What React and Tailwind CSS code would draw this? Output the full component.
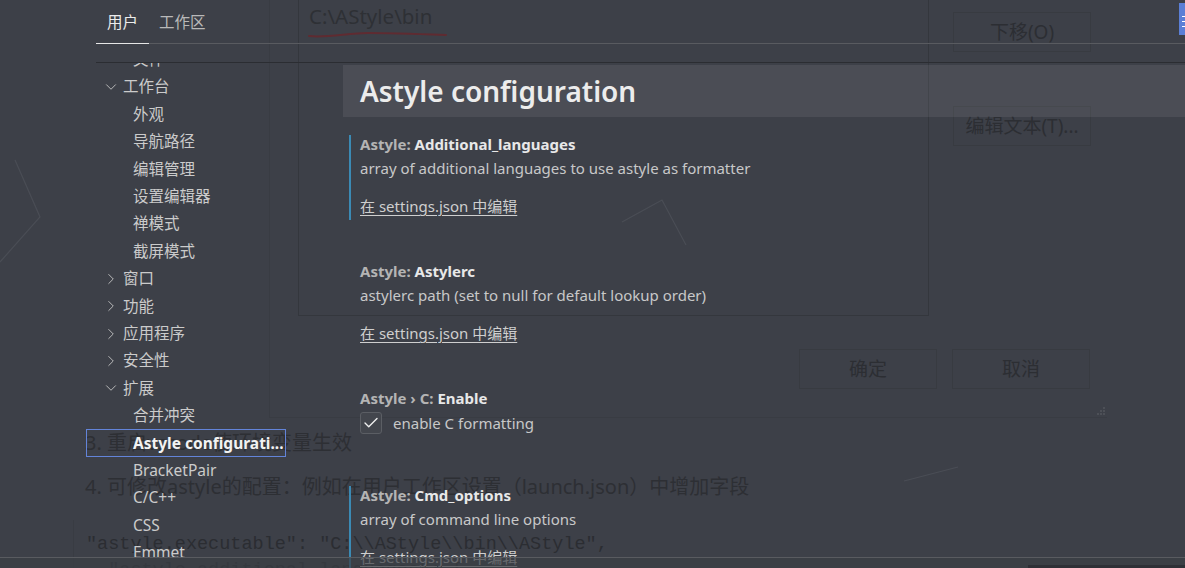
import React from "react";
import { ChevronDown, ChevronRight, Check } from "lucide-react";

const tree = [
  { label: "文件", level: 2 },
  { label: "工作台", level: 1, open: true },
  { label: "外观", level: 2 },
  { label: "导航路径", level: 2 },
  { label: "编辑管理", level: 2 },
  { label: "设置编辑器", level: 2 },
  { label: "禅模式", level: 2 },
  { label: "截屏模式", level: 2 },
  { label: "窗口", level: 1 },
  { label: "功能", level: 1 },
  { label: "应用程序", level: 1 },
  { label: "安全性", level: 1 },
  { label: "扩展", level: 1, open: true },
  { label: "合并冲突", level: 2 },
  { label: "Astyle configurati...", level: 2, selected: true },
  { label: "BracketPair", level: 2 },
  { label: "C/C++", level: 2 },
  { label: "CSS", level: 2 },
  { label: "Emmet", level: 2 },
];

function TreeRow({ item }) {
  return (
    <div
      className={
        "h-[27.4px] flex items-center shrink-0 " +
        (item.selected ? "ring-1 ring-inset ring-[#6384d9]" : "")
      }
    >
      {item.level === 1 ? (
        <>
          <span className="w-[16px]" />
          {item.open ? (
            <ChevronDown size={18} strokeWidth={1.2} className="text-[#c5c5c5]" />
          ) : (
            <ChevronRight size={18} strokeWidth={1.2} className="text-[#c5c5c5]" />
          )}
          <span className="ml-[3px] text-[#cbcbcb]">{item.label}</span>
        </>
      ) : (
        <span
          className={
            "ml-[47px] whitespace-nowrap " +
            (item.selected ? "font-bold text-[#f2f2f2]" : "text-[#cbcbcb]")
          }
        >
          {item.label}
        </span>
      )}
    </div>
  );
}

function Link() {
  return (
    <div className="mt-[14px] h-[24px] leading-[24px] text-[#cfcfcf] underline underline-offset-[3px] decoration-[#cfcfcf]">
      在 settings.json 中编辑
    </div>
  );
}

function Title({ pre, name }) {
  return (
    <div className="h-[18px] leading-[18px] font-bold whitespace-nowrap">
      <span className="text-[#b4b4b4]">{pre}</span>
      <span className="text-[#e8e8e8]">{name}</span>
    </div>
  );
}

export default function App() {
  return (
    <div
      className="relative w-[1185px] h-[568px] overflow-hidden bg-[#3d4048]"
      style={{ fontFamily: "'Noto Sans', 'Noto Sans CJK SC', sans-serif" }}
    >
      {/* background: faded dialog and blog text */}
      <div className="absolute inset-0 text-[#2c2e33]">
        <div className="ml-[269px] w-[838px] h-[418px] border-l border-b border-[#393c43] flex flex-col relative">
          <div className="flex h-[317px]">
            <div className="ml-[28px] w-[631px] h-[317px] -mt-px border border-[#34373d] pl-[10px] pt-[3px]">
              <div className="text-[20.5px] leading-[26px] text-[#2e3035]">C:\AStyle\bin</div>
              <svg width="140" height="10" viewBox="0 0 140 10" className="-ml-[1px] mt-[1px]">
                <path
                  d="M1 6 C 20 8, 40 3, 60 3 S 110 4, 138 5"
                  fill="none"
                  stroke="#5f2b31"
                  strokeWidth="2"
                  strokeLinecap="round"
                />
              </svg>
            </div>
            <div className="ml-[24px] flex flex-col">
              <div className="mt-[12px] w-[138px] h-[40px] border border-[#383b41] flex items-center justify-center text-[19px]">
                下移(O)
              </div>
              <div className="mt-[54px] w-[138px] h-[40px] border border-[#383b41] flex items-center justify-center text-[19px]">
                编辑文本(T)...
              </div>
            </div>
          </div>
          <div className="mt-[32px] flex justify-end pr-[17px] gap-[15px]">
            <div className="w-[138px] h-[40px] border border-[#383b41] flex items-center justify-center text-[19px]">
              确定
            </div>
            <div className="w-[138px] h-[40px] border border-[#383b41] flex items-center justify-center text-[19px]">
              取消
            </div>
          </div>
          <div className="absolute right-[2px] bottom-[2px] grid grid-cols-3 gap-[1px]">
            {[0, 0, 1, 0, 1, 1, 1, 1, 1].map((v, i) => (
              <span key={i} className={"w-[2px] h-[2px] " + (v ? "bg-[#4d5057]" : "")} />
            ))}
          </div>
        </div>
        <div className="pl-[85px] text-[20px] leading-[26px] text-[#2d2f34]">
          <div className="mt-[12px]">3. 重启vscode使环境变量生效</div>
          <div className="mt-[18px]">4. 可修改astyle的配置：例如在用户工作区设置（launch.json）中增加字段</div>
        </div>
        <div className="mt-[20px] ml-[73px] pl-[12px] pt-[12px] border-l border-[#393c43] font-['Liberation_Mono',monospace] text-[18.5px] leading-[26px] text-[#2b2d32] whitespace-pre">
          <div>{'"astyle.executable": "C:\\\\AStyle\\\\bin\\\\AStyle",'}</div>
          <div>{'  "astyle.additional_languages": ['}</div>
        </div>
      </div>

      {/* faint decoration lines */}
      <svg className="absolute inset-0 pointer-events-none" width="1185" height="568">
        <g stroke="#4a4d55" strokeWidth="1.2" fill="none">
          <path d="M622 222 L662 200 L686 245" />
          <path d="M15 160 L40 217 L0 262" />
          <path d="M904 481 L958 467" />
        </g>
      </svg>

      {/* foreground: settings editor */}
      <div className="absolute inset-0 flex flex-col">
        <div className="ml-[96px] h-[63px] shrink-0 border-b border-[#2b2d32]">
          <div className="h-[44px] border-b border-[#595b60] flex text-[15.5px]">
            <div className="h-[44px] px-[11px] flex items-center border-b border-[#e6e6e6] text-[#ececec] pt-[2px]">
              用户
            </div>
            <div className="h-[44px] px-[10px] flex items-center text-[#b9b9b9] pt-[2px]">
              工作区
            </div>
          </div>
        </div>

        <div className="flex flex-1 overflow-hidden">
          <div className="ml-[86px] w-[200px] shrink-0 flex flex-col -mt-[17px] text-[15.5px]">
            {tree.map((it, i) => (
              <TreeRow key={i} item={it} />
            ))}
          </div>

          <div className="ml-[57px] flex-1 flex flex-col text-[15px]">
            <div className="mt-[2px] h-[52px] shrink-0 bg-white/[0.07] flex items-center pl-[17px]">
              <span className="text-[28px] font-semibold text-[#ececec]">Astyle configuration</span>
            </div>

            <div className="pl-[6px] pt-[18px] flex flex-col">
              <div className="border-l-2 border-[#3b8ab4] pl-[9px] pb-[2px]">
                <Title pre="Astyle: " name="Additional_languages" />
                <div className="mt-[3px] h-[24px] leading-[24px] text-[#c8c8c8]">
                  array of additional languages to use astyle as formatter
                </div>
                <Link />
              </div>

              <div className="mt-[42px] border-l-2 border-transparent pl-[9px] pb-[2px]">
                <Title pre="Astyle: " name="Astylerc" />
                <div className="mt-[3px] h-[24px] leading-[24px] text-[#c8c8c8]">
                  astylerc path (set to null for default lookup order)
                </div>
                <Link />
              </div>

              <div className="mt-[42px] border-l-2 border-transparent pl-[9px]">
                <Title pre="Astyle › C: " name="Enable" />
                <div className="mt-[5px] flex items-center h-[22px]">
                  <div className="w-[22px] h-[22px] rounded-[3px] border border-[#5b5e64] bg-[#43464d] flex items-center justify-center">
                    <Check size={18} strokeWidth={1.8} className="text-[#f0f0f0]" />
                  </div>
                  <span className="ml-[11px] text-[#c8c8c8]">enable C formatting</span>
                </div>
              </div>

              <div className="mt-[52px] border-l-2 border-[#3b8ab4] pl-[9px]">
                <Title pre="Astyle: " name="Cmd_options" />
                <div className="mt-[3px] h-[24px] leading-[24px] text-[#c8c8c8]">
                  array of command line options
                </div>
                <Link />
              </div>
            </div>
          </div>
        </div>
      </div>

      {/* bottom band */}
      <div className="absolute left-0 right-0 bottom-0 h-[11px] border-t border-[#595b60] bg-[#3b3e45]/70 flex justify-end">
        <div className="mt-[7px] w-[157px] bg-[#2e3036]" />
      </div>

      {/* top-right blue tab */}
      <div className="absolute right-0 top-[3px] w-[6px] h-[32px] bg-[#5b7fd6] flex flex-col items-end pt-[13px] gap-[4px]">
        <span className="w-[3px] h-[1px] bg-white" />
        <span className="w-[3px] h-[1px] bg-white" />
        <span className="w-[3px] h-[1px] bg-white" />
      </div>
    </div>
  );
}
